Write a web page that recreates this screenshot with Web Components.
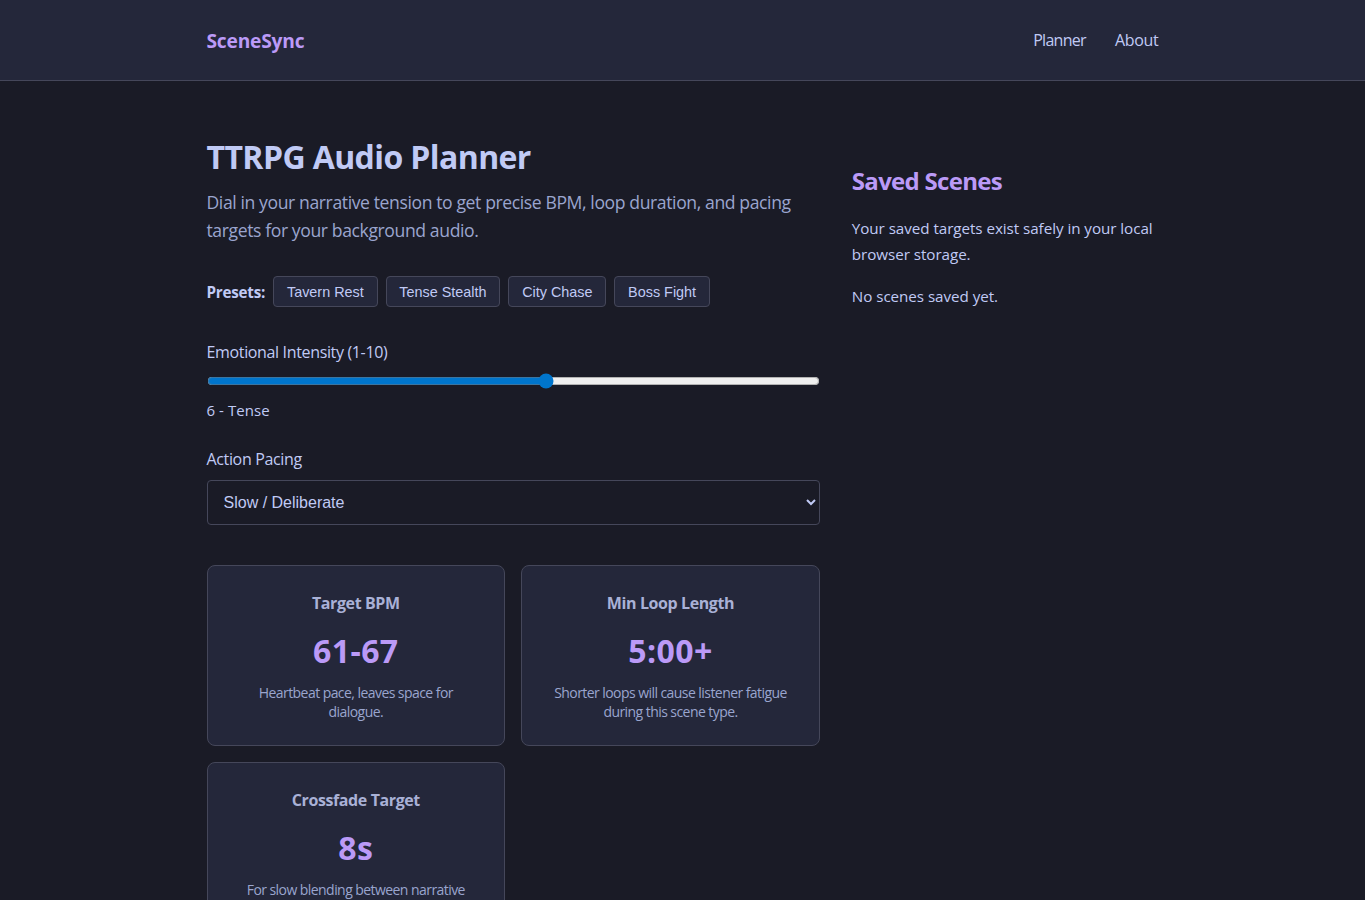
<!DOCTYPE html>
<html lang="en">
<head>
<meta charset="utf-8">
<title>SceneSync</title>
<style>
  html, body { margin: 0; height: 100%; }
  body {
    background: #1a1b26;
    color: #c0caf5;
    font-family: "Open Sans", "Noto Sans", sans-serif;
    line-height: 1.6;
    overflow: hidden;
  }
</style>
</head>
<body>
<scene-header></scene-header>
<scene-page>
  <audio-planner></audio-planner>
  <saved-scenes slot="side"></saved-scenes>
</scene-page>

<script>
// small helper so every element gets an open shadow root from a template
function makeTemplate(html) {
  const t = document.createElement("template");
  t.innerHTML = html;
  return t;
}

class BaseElement extends HTMLElement {
  constructor(template) {
    super();
    this.attachShadow({ mode: "open" });
    this.shadowRoot.appendChild(template.content.cloneNode(true));
  }
}

const headerTemplate = makeTemplate(`
  <style>
    :host { display: block; background: #24273a; border-bottom: 1px solid #45475a; }
    nav {
      box-sizing: border-box; max-width: 952px; height: 80px; margin: 0 auto; padding-top: 2px;
      display: flex; align-items: center; justify-content: space-between;
    }
    .logo { color: #bb9af7; font-size: 19.2px; font-weight: 700; letter-spacing: -0.2px; }
    .links { display: flex; gap: 29px; }
    a { color: #c0caf5; font-size: 16px; text-decoration: none; letter-spacing: -0.3px; }
    a.planner { letter-spacing: -0.7px; }
  </style>
  <nav>
    <span class="logo">SceneSync</span>
    <div class="links"><a class="planner" href="#">Planner</a><a href="#">About</a></div>
  </nav>
`);
class SceneHeader extends BaseElement {
  constructor() { super(headerTemplate); }
}
customElements.define("scene-header", SceneHeader);

const pageTemplate = makeTemplate(`
  <style>
    :host {
      display: grid; grid-template-columns: 2fr 1fr; gap: 32px;
      max-width: 952px; margin: 0 auto; padding-top: 48px;
    }
    aside { padding-top: 32px; }
  </style>
  <main><slot></slot></main>
  <aside><slot name="side"></slot></aside>
`);
class ScenePage extends BaseElement {
  constructor() { super(pageTemplate); }
}
customElements.define("scene-page", ScenePage);

const presetTemplate = makeTemplate(`
  <style>
    :host { display: inline-block; }
    button {
      background: #24273a; color: #c0caf5;
      border: 1px solid #45475a; border-radius: 4px;
      font: 14.4px "Liberation Sans", Arial, sans-serif;
      padding: 6.4px 12.8px; height: 31px; cursor: pointer;
    }
  </style>
  <button><slot></slot></button>
`);
class PresetButton extends BaseElement {
  constructor() { super(presetTemplate); }
}
customElements.define("preset-button", PresetButton);

const cardTemplate = makeTemplate(`
  <style>
    :host {
      display: block; box-sizing: border-box; height: 181px;
      background: #24273a; border: 1px solid #45475a; border-radius: 8px;
      padding: 25px 24px 24px; text-align: center;
    }
    h3 { margin: 0; color: #a9b1d6; font-size: 16px; font-weight: 700; letter-spacing: -0.4px; line-height: 25px; }
    .value { color: #bb9af7; font-size: 32px; font-weight: 700; line-height: 51px; margin: 9px 0 7px; letter-spacing: 0.4px; }
    p { margin: 0; color: #9aa5ce; font-size: 14px; line-height: 19px; letter-spacing: -0.56px; }
  </style>
  <h3></h3>
  <div class="value"></div>
  <p><slot></slot></p>
`);
class StatCard extends BaseElement {
  constructor() {
    super(cardTemplate);
    this.shadowRoot.querySelector("h3").textContent = this.getAttribute("label");
    this.shadowRoot.querySelector(".value").textContent = this.getAttribute("value");
  }
}
customElements.define("stat-card", StatCard);

const plannerTemplate = makeTemplate(`
  <style>
    :host { display: block; }
    h1 { margin: 2px 0 6px; font-size: 32px; line-height: 51px; font-weight: 700; color: #c0caf5; letter-spacing: -0.6px; }
    .lead { margin: 0 0 32px; color: #9aa5ce; font-size: 17.6px; line-height: 28px; letter-spacing: -0.4px; }
    .presets { display: flex; align-items: center; gap: 8px; margin-bottom: 32px; }
    .presets strong { font-size: 15.2px; letter-spacing: -0.22px; padding-top: 2px; }
    .field { margin-bottom: 24px; }
    label { display: block; font-size: 16px; line-height: 26px; margin-bottom: 8px; letter-spacing: -0.35px; }
    input[type=range] { display: block; width: 100%; margin: 0; height: 16px; accent-color: #0075cc; }
    output { display: block; margin-top: 9px; font-size: 15px; line-height: 24px; letter-spacing: 0.05px; }
    select {
      display: block; width: 100%; box-sizing: border-box; height: 45px;
      background: #1a1b26; color: #c0caf5; border: 1px solid #45475a; border-radius: 4px;
      font: 16px "Liberation Sans", Arial, sans-serif; padding: 0 12px;
    }
    .cards { display: grid; grid-template-columns: 1fr 1fr; gap: 16px; margin-top: 40px; }
  </style>
  <h1>TTRPG Audio Planner</h1>
  <p class="lead">Dial in your narrative tension to get precise BPM, loop duration, and pacing targets for your background audio.</p>
  <div class="presets">
    <strong>Presets:</strong>
    <preset-button>Tavern Rest</preset-button>
    <preset-button>Tense Stealth</preset-button>
    <preset-button>City Chase</preset-button>
    <preset-button>Boss Fight</preset-button>
  </div>
  <div class="field">
    <label for="intensity">Emotional Intensity (1-10)</label>
    <input id="intensity" type="range" min="1" max="10" value="6">
    <output>6 - Tense</output>
  </div>
  <div class="field">
    <label for="pacing">Action Pacing</label>
    <select id="pacing">
      <option>Slow / Deliberate</option>
      <option>Moderate</option>
      <option>Fast / Frantic</option>
    </select>
  </div>
  <div class="cards">
    <stat-card label="Target BPM" value="61-67">Heartbeat pace, leaves space for dialogue.</stat-card>
    <stat-card label="Min Loop Length" value="5:00+">Shorter loops will cause listener fatigue during this scene type.</stat-card>
    <stat-card label="Crossfade Target" value="8s">For slow blending between narrative beats.</stat-card>
  </div>
`);
class AudioPlanner extends BaseElement {
  constructor() { super(plannerTemplate); }
}
customElements.define("audio-planner", AudioPlanner);

const savedTemplate = makeTemplate(`
  <style>
    :host { display: block; }
    h2 { margin: 1px 0 15px; color: #bb9af7; font-size: 24px; line-height: 38px; font-weight: 700; letter-spacing: -0.7px; }
    p { margin: 0 0 16px; font-size: 15.2px; line-height: 26px; letter-spacing: -0.05px; }
  </style>
  <h2>Saved Scenes</h2>
  <p>Your saved targets exist safely in your local browser storage.</p>
  <p>No scenes saved yet.</p>
`);
class SavedScenes extends BaseElement {
  constructor() { super(savedTemplate); }
}
customElements.define("saved-scenes", SavedScenes);
</script>
</body>
</html>
